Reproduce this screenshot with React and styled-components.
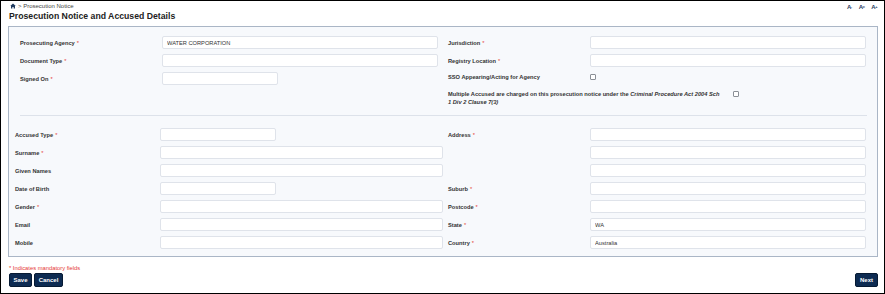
import React from "react";
import styled, { createGlobalStyle } from "styled-components";

const GlobalStyle = createGlobalStyle`
  html, body {
    margin: 0;
    padding: 0;
    background: #fff;
    font-family: "Liberation Sans", Arial, sans-serif;
  }
`

const Frame = styled.div`
  width: 885px;
  height: 294px;
  box-sizing: border-box;
  border: 1px solid #000;
  padding: 0 6px 0 7px;
  display: flex;
  flex-direction: column;
  background: #fff;
`

const TopBar = styled.div`
  height: 9px;
  display: flex;
  align-items: center;
  justify-content: space-between;
`

const Breadcrumb = styled.div`
  display: flex;
  align-items: center;
  gap: 2px;
  padding-left: 2px;
  font-size: 6px;
  color: #444;
`

const FontSizes = styled.div`
  display: flex;
  gap: 7px;
  padding-right: 1px;
  padding-top: 2px;
`

const FontSizeIcon = styled.span`
  font-size: ${p => p.$size}px;
  font-weight: bold;
  color: #1f3a5f;
  line-height: 1;
  letter-spacing: -0.5px;
  sup {
    font-size: 4px;
    vertical-align: 1px;
  }
`

const Title = styled.h1`
  margin: 0;
  padding-left: 1px;
  height: 12px;
  line-height: 12px;
  font-size: 8.7px;
  font-weight: bold;
  color: #222;
`

const Panel = styled.div`
  margin-top: 4px;
  height: 231px;
  box-sizing: border-box;
  border: 1px solid #aab6c6;
  background: #f7f9fc;
`

const SectionTop = styled.div`
  padding: 9px 10px 0 11px;
`

const Columns = styled.div`
  display: flex;
  gap: 10px;
  align-items: flex-start;
`

const Column = styled.div`
  width: 418px;
  display: flex;
  flex-direction: column;
  gap: 5px;
`

const Divider = styled.div`
  margin-top: 9px;
  height: 1px;
  background: #dde2ea;
`

const SectionBottom = styled.div`
  padding: 12px 10px 0 6px;
  display: grid;
  grid-template-columns: 428px 418px;
  column-gap: 5px;
  row-gap: 5px;
`

const Field = styled.div`
  display: flex;
  align-items: center;
  height: ${p => p.$h || 13}px;
`

const Label = styled.label`
  width: ${p => p.$w}px;
  flex-shrink: 0;
  font-size: 5.7px;
  font-weight: bold;
  color: #333;
`

const Star = styled.span`
  color: #e53935;
  margin-left: 2px;
  font-weight: normal;
`

const Input = styled.input`
  box-sizing: border-box;
  height: 13px;
  width: ${p => (p.$w ? `${p.$w}px` : "auto")};
  flex: ${p => (p.$w ? "none" : "1")};
  min-width: 0;
  margin: 0;
  padding: 0 4px;
  border: 1px solid #dfe3ea;
  border-radius: 2px;
  background: #fff;
  font-family: "Liberation Sans", Arial, sans-serif;
  font-size: 5.7px;
  color: #333;
  outline: none;
`

const Check = styled.input`
  appearance: none;
  box-sizing: border-box;
  width: 6px;
  height: 6px;
  margin: ${p => p.$m || "0"};
  border: 1px solid #8a8f96;
  border-radius: 1px;
  background: #fff;
  flex-shrink: 0;
`

const MultiRow = styled.div`
  display: flex;
  align-items: flex-start;
  margin-top: 4px;
`

const MultiText = styled.div`
  width: 276px;
  font-size: 5.7px;
  font-weight: bold;
  line-height: 8px;
  color: #333;
  em {
    font-style: italic;
  }
`

const Mandatory = styled.div`
  margin-top: 7px;
  padding-left: 1px;
  height: 8px;
  line-height: 8px;
  font-size: 5.8px;
  color: #e53935;
`

const ButtonRow = styled.div`
  margin-top: 1px;
  padding-left: 1px;
  display: flex;
  align-items: center;
`

const Button = styled.button`
  box-sizing: border-box;
  width: ${p => p.$w}px;
  height: 14px;
  margin: 0 2px 0 0;
  padding: 0;
  border: 1px solid #061a33;
  border-radius: 2px;
  background: #0d2b52;
  color: #fff;
  font-family: "Liberation Sans", Arial, sans-serif;
  font-size: 6px;
  font-weight: bold;
  ${p => p.$right && "margin: 0 0 0 auto;"}
`

const HomeIcon = () => (
  <svg width="6" height="6" viewBox="0 0 12 12">
    <path d="M6 1 L11.5 6 L10 6 L10 11 L7.3 11 L7.3 8 L4.7 8 L4.7 11 L2 11 L2 6 L0.5 6 Z" fill="#1f3a5f" />
  </svg>
);

const Req = ({ children }) => (
  <>
    {children}
    <Star>*</Star>
  </>
);

const bottomRows = [
  [{ label: "Accused Type", req: true, w: 116 }, { label: "Address", req: true }],
  [{ label: "Surname", req: true }, { label: "" }],
  [{ label: "Given Names" }, { label: "" }],
  [{ label: "Date of Birth", w: 116 }, { label: "Suburb", req: true }],
  [{ label: "Gender", req: true }, { label: "Postcode", req: true }],
  [{ label: "Email" }, { label: "State", req: true, value: "WA" }],
  [{ label: "Mobile" }, { label: "Country", req: true, value: "Australia" }],
];

const App = () => {
  return (
    <>
      <GlobalStyle />
      <Frame>
        <TopBar>
          <Breadcrumb>
            <HomeIcon />
            <span>&gt; Prosecution Notice</span>
          </Breadcrumb>
          <FontSizes>
            <FontSizeIcon $size={6}>A<sup>-</sup></FontSizeIcon>
            <FontSizeIcon $size={6}>A<sup>=</sup></FontSizeIcon>
            <FontSizeIcon $size={6}>A<sup>+</sup></FontSizeIcon>
          </FontSizes>
        </TopBar>
        <Title>Prosecution Notice and Accused Details</Title>

        <Panel>
          <SectionTop>
            <Columns>
              <Column>
                <Field>
                  <Label $w={142}><Req>Prosecuting Agency</Req></Label>
                  <Input defaultValue="WATER CORPORATION" />
                </Field>
                <Field>
                  <Label $w={142}><Req>Document Type</Req></Label>
                  <Input />
                </Field>
                <Field>
                  <Label $w={142}><Req>Signed On</Req></Label>
                  <Input $w={116} />
                </Field>
              </Column>
              <Column>
                <Field>
                  <Label $w={142}><Req>Jurisdiction</Req></Label>
                  <Input />
                </Field>
                <Field>
                  <Label $w={142}><Req>Registry Location</Req></Label>
                  <Input />
                </Field>
                <Field $h={9}>
                  <Label $w={142}>SSO Appearing/Acting for Agency</Label>
                  <Check type="checkbox" />
                </Field>
                <MultiRow>
                  <MultiText>
                    Multiple Accused are charged on this prosecution notice under the{" "}
                    <em>Criminal Procedure Act 2004 Sch 1 Div 2 Clause 7(3)</em>
                  </MultiText>
                  <Check type="checkbox" $m="1px 0 0 9px" />
                </MultiRow>
              </Column>
            </Columns>
            <Divider />
          </SectionTop>

          <SectionBottom>
            {bottomRows.map(([left, right], i) => (
              <React.Fragment key={i}>
                <Field>
                  <Label $w={145}>{left.req ? <Req>{left.label}</Req> : left.label}</Label>
                  <Input $w={left.w} />
                </Field>
                <Field>
                  <Label $w={142}>{right.req ? <Req>{right.label}</Req> : right.label}</Label>
                  <Input defaultValue={right.value} />
                </Field>
              </React.Fragment>
            ))}
          </SectionBottom>
        </Panel>

        <Mandatory>* Indicates mandatory fields</Mandatory>
        <ButtonRow>
          <Button $w={23}>Save</Button>
          <Button $w={29}>Cancel</Button>
          <Button $w={23} $right>Next</Button>
        </ButtonRow>
      </Frame>
    </>
  );
};

export default App;
